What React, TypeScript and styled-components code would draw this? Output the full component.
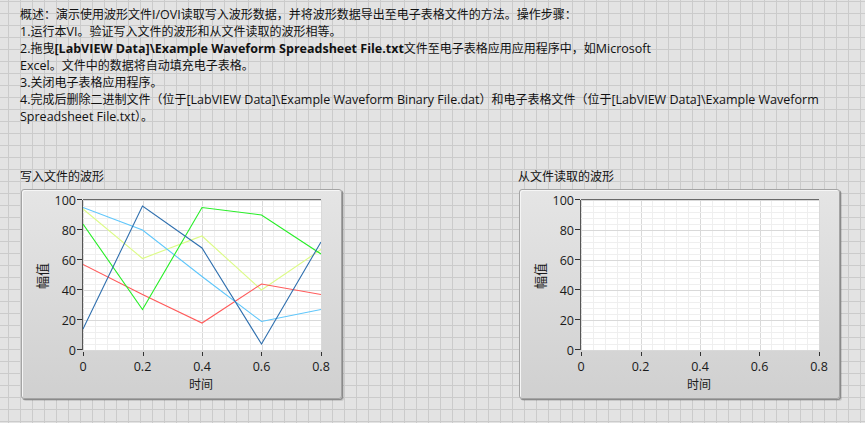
import React from 'react';
import styled, { createGlobalStyle } from 'styled-components';

const GlobalStyle = createGlobalStyle`
	html, body {
		margin: 0;
		height: 100%;
	}
	body {
		background-color: #e3e3e3;
		background-image:
			linear-gradient(to right, #cbcbcb 1px, transparent 1px),
			linear-gradient(to bottom, #cbcbcb 1px, transparent 1px);
		background-size: 12px 12px;
		background-position: 8px 1px;
		font-family: 'Open Sans', 'Noto Sans CJK SC', sans-serif;
		color: #111;
	}
`;

const Page = styled.div`
	padding: 6px 0 0 20px;
`;

const Description = styled.div`
	font-size: 12px;
	line-height: 17px;
`;

const Line = styled.div`
	white-space: nowrap;
`;

// latin runs are a touch wider in the original (Segoe UI)
const L = styled.span<{ $bold?: boolean }>`
	font-size: 12.5px;
	font-weight: ${(p) => (p.$bold ? 700 : 400)};
`;

const ChartsRow = styled.div`
	display: flex;
	gap: 176px;
	margin-top: 43px;
`;

const ChartGroup = styled.div`
	display: flex;
	flex-direction: column;
`;

const ChartLabel = styled.div`
	font-size: 12px;
	line-height: 17px;
	height: 17px;
`;

const Panel = styled.div`
	box-sizing: border-box;
	width: 321px;
	height: 210px;
	margin: 4px 0 0 1px;
	border: 1px solid #a4a4a4;
	border-radius: 3px;
	background: linear-gradient(to bottom, #e5e5e5, #d0d0d0);
	box-shadow: 1px 1px 0 #8a8a8a, 2px 2px 0 rgba(0, 0, 0, 0.12), inset 1px 1px 0 #f6f6f6;
	svg {
		display: block;
	}
`;

type Series = { color: string; values: number[] };

const PX = 61;
const PY = 10;
const PW = 238;
const PH = 150;
const TIMES = [0, 0.2, 0.4, 0.6, 0.8];
const AMPS = [0, 20, 40, 60, 80, 100];

const sx = (t: number) => PX + (t / 0.8) * PW;
const sy = (v: number) => PY + PH - (v / 100) * PH;
const crisp = (n: number) => Math.round(n) + 0.5;

const written: Series[] = [
	{ color: '#dcfb86', values: [94, 61, 76, 40, 67] },
	{ color: '#ff5a5a', values: [57, 37, 18, 44, 37] },
	{ color: '#5ec6fb', values: [95, 80, 49, 19, 27] },
	{ color: '#27ee27', values: [84, 27, 95, 90, 64] },
	{ color: '#2f6fae', values: [14, 96, 68, 4, 72] },
];

const axisFont = { fontFamily: "'Open Sans', 'Noto Sans CJK SC', sans-serif", fontSize: 12.5, fill: '#1a1a1a' };

const WaveformGraph = ({ series }: { series: Series[] }) => {
	const minorX = Array.from({ length: 21 }, (_, i) => PX + (i * PW) / 20);
	const minorY = Array.from({ length: 26 }, (_, i) => PY + (i * PH) / 25);
	return (
		<svg width={319} height={208}>
			<rect x={PX} y={PY} width={PW} height={PH} fill="#fff" />
			<g shapeRendering="crispEdges">
				{minorX.map((x, i) => (
					<line key={'mx' + i} x1={crisp(x)} x2={crisp(x)} y1={PY} y2={PY + PH} stroke={i % 5 === 0 ? '#d9d9d9' : '#efefef'} />
				))}
				{minorY.map((y, i) => (
					<line key={'my' + i} x1={PX} x2={PX + PW} y1={crisp(y)} y2={crisp(y)} stroke={i % 5 === 0 ? '#d9d9d9' : '#efefef'} />
				))}
			</g>
			<clipPath id="plot">
				<rect x={PX} y={PY} width={PW} height={PH} />
			</clipPath>
			<g clipPath="url(#plot)" fill="none" strokeWidth={1.1}>
				{series.map((s) => (
					<polyline key={s.color} stroke={s.color} points={s.values.map((v, i) => `${sx(TIMES[i])},${sy(v)}`).join(' ')} />
				))}
			</g>
			<g shapeRendering="crispEdges" stroke="#555">
				<line x1={PX - 0.5} x2={PX - 0.5} y1={PY} y2={PY + PH} />
				<line x1={PX} x2={PX + PW} y1={PY - 0.5} y2={PY - 0.5} stroke="#6a6a6a" />
				{AMPS.map((v) => (
					<line key={'yt' + v} x1={PX - 6} x2={PX - 1} y1={crisp(sy(v)) - 1} y2={crisp(sy(v)) - 1} stroke="#333" />
				))}
				{TIMES.map((t) => (
					<line key={'xt' + t} x1={crisp(sx(t))} x2={crisp(sx(t))} y1={PY + PH + 2} y2={PY + PH + 6} stroke="#333" />
				))}
			</g>
			{AMPS.map((v) => (
				<text key={'yl' + v} x={PX - 7} y={sy(v)} textAnchor="end" dominantBaseline="central" {...axisFont}>
					{v}
				</text>
			))}
			{TIMES.map((t) => (
				<text key={'xl' + t} x={sx(t)} y={176} textAnchor="middle" dominantBaseline="central" {...axisFont}>
					{t}
				</text>
			))}
			<text x={179} y={194.5} textAnchor="middle" dominantBaseline="central" {...axisFont} fontSize={12}>
				时间
			</text>
			<text x={20} y={86} textAnchor="middle" dominantBaseline="central" transform="rotate(-90 20 86)" {...axisFont} fontSize={13}>
				幅值
			</text>
		</svg>
	);
};

const App = () => (
	<>
		<GlobalStyle />
		<Page>
			<Description>
				<Line>概述：演示使用波形文件<L>I/OVI</L>读取写入波形数据，并将波形数据导出至电子表格文件的方法。操作步骤：</Line>
				<Line><L>1.</L>运行本<L>VI</L>。验证写入文件的波形和从文件读取的波形相等。</Line>
				<Line>
					<L>2.</L>拖曳<L $bold>[LabVIEW Data]\Example Waveform Spreadsheet File.txt</L>文件至电子表格应用应用程序中，如<L>Microsoft</L>
				</Line>
				<Line><L>Excel</L>。文件中的数据将自动填充电子表格。</Line>
				<Line><L>3.</L>关闭电子表格应用程序。</Line>
				<Line>
					<L>4.</L>完成后删除二进制文件（位于<L>[LabVIEW Data]\Example Waveform Binary File.dat</L>）和电子表格文件（位于<L>[LabVIEW Data]\Example Waveform</L>
				</Line>
				<Line><L>Spreadsheet File.txt</L>）。</Line>
			</Description>
			<ChartsRow>
				<ChartGroup>
					<ChartLabel>写入文件的波形</ChartLabel>
					<Panel>
						<WaveformGraph series={written} />
					</Panel>
				</ChartGroup>
				<ChartGroup>
					<ChartLabel>从文件读取的波形</ChartLabel>
					<Panel>
						<WaveformGraph series={[]} />
					</Panel>
				</ChartGroup>
			</ChartsRow>
		</Page>
	</>
);

export default App;
